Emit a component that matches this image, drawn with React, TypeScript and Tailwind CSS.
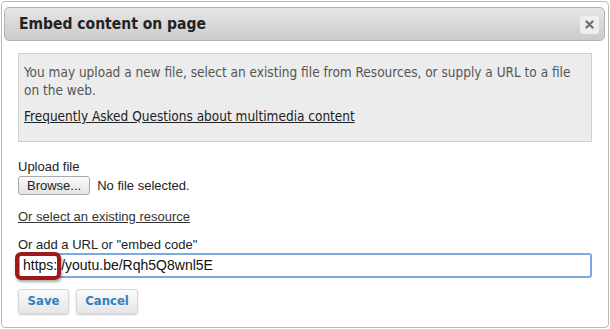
// 미디어 삽입 대화상자 — 파일 업로드, 리소스 선택, URL/임베드 코드 입력.
import React, { useState } from 'react';

export default function App() {
  const [url, setUrl] = useState('https://youtu.be/Rqh5Q8wnl5E');

  return (
    <div className="w-[610px] h-[329px] bg-white overflow-hidden">
      <div className="ml-[1px] mt-[1px] w-[608px] h-[327px] border border-[#b9b9b9] rounded-[4px] bg-white pl-[2px] pr-[3px] pt-[5px]">
        {/* title bar */}
        <div className="h-[34px] border border-[#b3b3b3] rounded-[5px] bg-gradient-to-b from-[#e6e6e6] to-[#cbcbcb] flex items-center justify-between pl-[14px] pr-[5px] pt-[1px]">
          <h2 className="text-[15.5px] font-bold text-[#222] font-['DejaVu_Sans_Condensed','DejaVu_Sans',sans-serif]">
            Embed content on page
          </h2>
          <button className="w-[19px] h-[18px] rounded-[3px] bg-[#eeeeee] flex items-center justify-center">
            <svg width="9" height="9" viewBox="0 0 9 9">
              <path d="M1.5 1.5 L7.5 7.5 M7.5 1.5 L1.5 7.5" stroke="#707070" strokeWidth="2.4" strokeLinecap="round" />
            </svg>
          </button>
        </div>

        <div className="pl-[14px] pr-[13px]">
          {/* info box */}
          <div className="mt-[12px] h-[89px] border border-[#cfcfcf] bg-[#ececec] pl-[5px] pr-[14px] pt-[9px] text-[13.5px] leading-[18px] text-[#555] font-['DejaVu_Sans_Condensed','DejaVu_Sans',sans-serif]">
            <p>You may upload a new file, select an existing file from Resources, or supply a URL to a file on the web.</p>
            <a href="#" className="mt-[8px] block w-fit text-[#222] underline">
              Frequently Asked Questions about multimedia content
            </a>
          </div>

          <div className="font-['Liberation_Sans',sans-serif] text-[13px] text-[#222]">
            <label className="mt-[17px] block leading-[16px]">Upload file</label>
            <div className="mt-[1px] flex items-center gap-[7px]">
              <button className="h-[19px] px-[8px] border border-[#a9a9a9] rounded-[3px] bg-gradient-to-b from-[#fbfbfb] to-[#e3e3e3] leading-none">
                Browse...
              </button>
              <span>No file selected.</span>
            </div>

            <a href="#" className="mt-[13px] block w-fit leading-[16px] text-[#333] underline">
              Or select an existing resource
            </a>

            <label className="mt-[12px] block leading-[16px]">Or add a URL or "embed code"</label>
            <div className="relative">
              <input
                value={url}
                onChange={(e) => setUrl(e.target.value)}
                className="w-full h-[25px] border-2 border-[#7ea8e2] rounded-[3px] px-[3px] text-[14px] text-[#111] outline-none font-['Liberation_Sans',sans-serif]"
              />
              {/* red highlight annotation */}
              <div className="absolute left-[-3px] top-[-1px] w-[46px] h-[28px] border-[4px] border-[#9e1a1a] rounded-[6px] shadow-[1px_2px_3px_rgba(0,0,0,0.35)] pointer-events-none" />
            </div>

            <div className="mt-[11px] flex gap-[7px] font-['DejaVu_Sans_Condensed','DejaVu_Sans',sans-serif]">
              <button className="h-[25px] w-[51px] border border-[#d7d7d7] rounded-[3px] bg-gradient-to-b from-[#fafafa] to-[#e6e6e6] shadow-[0_1px_2px_rgba(0,0,0,0.2)] text-[13px] font-bold text-[#2f7fc6]">
                Save
              </button>
              <button className="h-[25px] w-[62px] border border-[#d7d7d7] rounded-[3px] bg-gradient-to-b from-[#fafafa] to-[#e6e6e6] shadow-[0_1px_2px_rgba(0,0,0,0.2)] text-[13px] font-bold text-[#2f7fc6]">
                Cancel
              </button>
            </div>
          </div>
        </div>
      </div>
    </div>
  );
}
